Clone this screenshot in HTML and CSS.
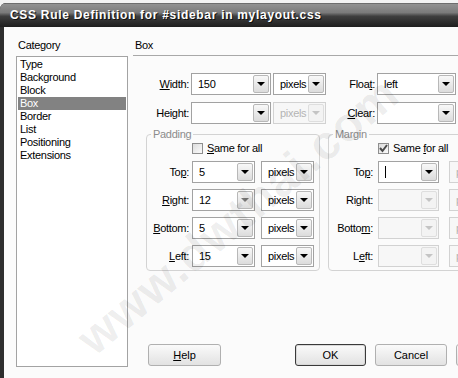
FILE: index.html
```html
<!DOCTYPE html>
<html lang="en">
<head>
    <meta charset="UTF-8">
    <meta name="viewport" content="width=device-width, initial-scale=1.0">
    <title>CSS Rule Definition</title>
    <link rel="stylesheet" href="styles.css">
</head>
<body>

<div class="window">
    <!-- Title bar -->
    <div class="titlebar">CSS Rule Definition for #sidebar in mylayout.css</div>

    <div class="dialog">
        <!-- Category list -->
        <div class="category">
            <div class="col-label">Category</div>
            <ul class="cat-list">
                <li>Type</li>
                <li>Background</li>
                <li>Block</li>
                <li class="selected">Box</li>
                <li>Border</li>
                <li>List</li>
                <li>Positioning</li>
                <li>Extensions</li>
            </ul>
        </div>

        <!-- Box panel -->
        <div class="panel">
            <div class="panel-title">Box</div>

            <div class="size-grid">
                <label class="lbl"><u>W</u>idth:</label>
                <div class="combo"><span class="combo-value">150</span><span class="combo-btn"></span></div>
                <div class="combo"><span class="combo-value">pixels</span><span class="combo-btn"></span></div>
                <label class="lbl">Floa<u>t</u>:</label>
                <div class="combo"><span class="combo-value">left</span><span class="combo-btn"></span></div>

                <label class="lbl">Height:</label>
                <div class="combo"><span class="combo-value"></span><span class="combo-btn"></span></div>
                <div class="combo disabled"><span class="combo-value">pixels</span><span class="combo-btn"></span></div>
                <label class="lbl"><u>C</u>lear:</label>
                <div class="combo"><span class="combo-value"></span><span class="combo-btn"></span></div>
            </div>

            <div class="groups">
                <fieldset class="group">
                    <legend>Padding</legend>
                    <div class="fs-grid">
                        <div class="check-row">
                            <span class="checkbox"></span><span><u>S</u>ame for all</span>
                        </div>

                        <label class="lbl">To<u>p</u>:</label>
                        <div class="combo"><span class="combo-value">5</span><span class="combo-btn"></span></div>
                        <div class="combo unit"><span class="combo-value">pixels</span><span class="combo-btn"></span></div>

                        <label class="lbl"><u>R</u>ight:</label>
                        <div class="combo"><span class="combo-value">12</span><span class="combo-btn hot"></span></div>
                        <div class="combo unit"><span class="combo-value">pixels</span><span class="combo-btn"></span></div>

                        <label class="lbl"><u>B</u>ottom:</label>
                        <div class="combo"><span class="combo-value">5</span><span class="combo-btn"></span></div>
                        <div class="combo unit"><span class="combo-value">pixels</span><span class="combo-btn"></span></div>

                        <label class="lbl"><u>L</u>eft:</label>
                        <div class="combo"><span class="combo-value">15</span><span class="combo-btn"></span></div>
                        <div class="combo unit"><span class="combo-value">pixels</span><span class="combo-btn"></span></div>
                    </div>
                </fieldset>

                <fieldset class="group group-margin">
                    <legend>Margin</legend>
                    <div class="fs-grid">
                        <div class="check-row">
                            <span class="checkbox checked">
                                <svg width="9" height="9" viewBox="0 0 9 9"><polyline points="1,4 3.5,7 8,1" fill="none" stroke="#4a4a4a" stroke-width="2"/></svg>
                            </span><span>Same <u>f</u>or all</span>
                        </div>

                        <label class="lbl">To<u>p</u>:</label>
                        <div class="combo"><span class="combo-value"><span class="caret"></span></span><span class="combo-btn"></span></div>
                        <div class="combo unit disabled"><span class="combo-value">pixels</span><span class="combo-btn"></span></div>

                        <label class="lbl">Ri<u>g</u>ht:</label>
                        <div class="combo disabled"><span class="combo-value"></span><span class="combo-btn"></span></div>
                        <div class="combo unit disabled"><span class="combo-value">pixels</span><span class="combo-btn"></span></div>

                        <label class="lbl">Botto<u>m</u>:</label>
                        <div class="combo disabled"><span class="combo-value"></span><span class="combo-btn"></span></div>
                        <div class="combo unit disabled"><span class="combo-value">pixels</span><span class="combo-btn"></span></div>

                        <label class="lbl">L<u>e</u>ft:</label>
                        <div class="combo disabled"><span class="combo-value"></span><span class="combo-btn"></span></div>
                        <div class="combo unit disabled"><span class="combo-value">pixels</span><span class="combo-btn"></span></div>
                    </div>
                </fieldset>
            </div>

            <div class="buttons">
                <button class="btn btn-help"><u>H</u>elp</button>
                <button class="btn btn-ok">OK</button>
                <button class="btn">Cancel</button>
                <button class="btn">Apply</button>
            </div>
        </div>
    </div>

    <!-- watermark over the whole dialog -->
    <div class="watermark">www.dwthai.com</div>
</div>

</body>
</html>
```

FILE: styles.css
```css
body {
    margin: 0;
    background: #f2f2f2;
    font-family: "Liberation Sans", Arial, sans-serif;
    font-size: 11px;
    letter-spacing: -0.3px;
    color: #000;
    overflow: hidden;
}
.window {
    position: relative;
    margin-top: 3px;
    height: 375px;
    background: #2e2e2e;
    border-top-left-radius: 6px;
    overflow: hidden;
}
.titlebar {
    height: 24px;
    padding: 1px 0 0 10px;
    box-sizing: border-box;
    line-height: 23px;
    background: linear-gradient(to bottom, #5a5a5a 0, #909090 6%, #7a7a7a 40%, #3e3e3e 55%, #1e1e1e 100%);
    color: #fff;
    font-size: 12px;
    font-weight: bold;
    letter-spacing: 0.7px;
    text-shadow: 1px 1px 0 #111;
    white-space: nowrap;
}
.dialog {
    margin-left: 4px;
    height: 351px;
    box-sizing: border-box;
    padding: 12px 0 0 12px;
    background: #fbfbfb;
    display: grid;
    grid-template-columns: 112px 1fr;
    column-gap: 5px;
}

/* category column */
.col-label {
    line-height: 13px;
    height: 17px;
    padding-left: 2px;
}
.cat-list {
    list-style: none;
    margin: 0;
    padding: 1px;
    height: 311px;
    box-sizing: border-box;
    background: #fff;
    border: 1px solid #a3a3a3;
}
.cat-list li {
    line-height: 13px;
    padding-left: 2px;
}
.cat-list li.selected {
    background: #828282;
    color: #fff;
}

/* box panel */
.panel {
    min-width: 0;
}
.panel-title {
    line-height: 13px;
    padding: 0 0 3px 2px;
    border-bottom: 1px solid #a8a8a8;
}
.size-grid {
    margin-top: 17px;
    display: grid;
    grid-template-columns: 56px 80px 53px 47px 79px;
    grid-auto-rows: 22px;
    column-gap: 2px;
    row-gap: 7px;
}
.lbl {
    text-align: right;
    line-height: 22px;
    white-space: nowrap;
}

/* combo boxes */
.combo {
    display: flex;
    height: 22px;
    box-sizing: border-box;
    padding: 1px;
    border: 1px solid #a2a2a2;
    background: #fff;
}
.combo-value {
    flex: 1;
    padding-left: 5px;
    line-height: 18px;
    white-space: nowrap;
    overflow: hidden;
}
.combo-btn {
    width: 14px;
    flex: none;
    border: 1px solid #b8b8b8;
    border-radius: 2px;
    background: linear-gradient(to bottom, #f8f8f8, #dcdcdc);
    display: flex;
    align-items: center;
    justify-content: center;
}
.combo-btn::after {
    content: "";
    border-left: 4px solid transparent;
    border-right: 4px solid transparent;
    border-top: 4px solid #000;
}
.combo-btn.hot::after {
    border-top-color: #777;
}
.combo.disabled {
    border-color: #d2d2d2;
    background: #f7f7f7;
    color: #b4b4b4;
}
.combo.disabled .combo-btn {
    border-color: #dedede;
    background: #f3f3f3;
}
.combo.disabled .combo-btn::after {
    border-top-color: #c4c4c4;
}
.caret {
    display: inline-block;
    width: 1px;
    height: 12px;
    margin-top: 3px;
    background: #000;
    vertical-align: top;
}

/* padding / margin groups */
.groups {
    margin-top: 4px;
    padding-left: 13px;
    display: flex;
    gap: 8px;
}
.group {
    flex: none;
    margin: 0;
    padding: 0 5px 3px 2px;
    border: 1px solid #d3d3d3;
    border-radius: 4px;
}
.group legend {
    margin-left: 2px;
    padding: 0 2px;
    line-height: 13px;
    color: #8c8c8c;
}
.fs-grid {
    display: grid;
    grid-template-columns: 40px 63px 56px;
    grid-template-rows: 14px repeat(4, 22px);
    column-gap: 3px;
    row-gap: 6px;
}
.group-margin .fs-grid {
    grid-template-columns: 42px 61px 58px;
    column-gap: 5px;
}
.fs-grid .unit {
    width: 53px;
    justify-self: end;
}
.check-row {
    grid-column: 2 / 4;
    display: flex;
    align-items: center;
    gap: 4px;
    white-space: nowrap;
}
.checkbox {
    width: 11px;
    height: 11px;
    box-sizing: border-box;
    border: 1px solid #8e8e8e;
    background: linear-gradient(135deg, #dcdcdc, #fbfbfb);
    display: flex;
    align-items: center;
    justify-content: center;
}

/* dialog buttons */
.buttons {
    margin-top: 73px;
    padding-left: 15px;
    display: flex;
    gap: 9px;
}
.btn {
    flex: none;
    width: 72px;
    height: 22px;
    padding: 0;
    font: inherit;
    border: 1px solid #b0b0b0;
    border-radius: 3px;
    background: linear-gradient(to bottom, #fafafa, #e2e2e2);
    color: #000;
}
.btn-help {
    width: 73px;
}
.btn-ok {
    width: 71px;
    margin-left: 65px;
    border-color: #3a3a3a;
    box-shadow: inset 0 0 0 1px #d8d8d8;
}

.watermark {
    position: absolute;
    left: 8px;
    top: 185px;
    width: 460px;
    line-height: 56px;
    text-align: center;
    font-size: 48px;
    font-weight: bold;
    letter-spacing: 1px;
    color: rgba(0, 0, 0, 0.07);
    transform: rotate(-40deg);
    pointer-events: none;
}
```
